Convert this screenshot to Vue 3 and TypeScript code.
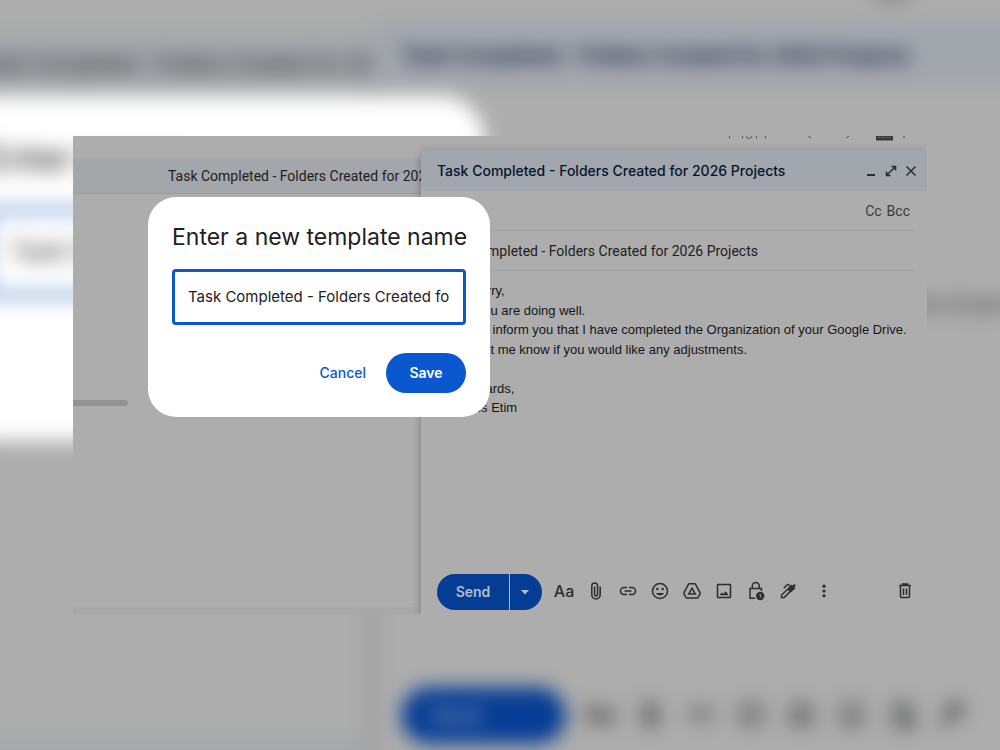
<script setup lang="ts">
import { ref } from 'vue'

const subject = ref('Task Completed - Folders Created for 2026 Projects')
const templateName = ref(subject.value)

const lines: string[] = [
  'Hello Harry,',
  'I hope you are doing well.',
  'This is to inform you that I have completed the Organization of your Google Drive.',
  'Please let me know if you would like any adjustments.',
  '',
  'Best regards,',
  'Precious Etim',
]

interface Tool {
  id: string
  label: string
}

const tools: Tool[] = [
  { id: 'attach', label: 'Attach files' },
  { id: 'link', label: 'Insert link' },
  { id: 'emoji', label: 'Insert emoji' },
  { id: 'drive', label: 'Insert files using Drive' },
  { id: 'image', label: 'Insert photo' },
  { id: 'lock', label: 'Confidential mode' },
  { id: 'pen', label: 'Insert signature' },
]
</script>

<template>
  <div class="page">
    <svg class="sprite" aria-hidden="true">
      <symbol id="attach" viewBox="0 0 20 20">
        <path class="line" d="M14.200 5.500v8.200a4.200 4.200 0 0 1-8.400 0V4.800a2.900 2.900 0 0 1 5.800 0v8.700a1.500 1.500 0 0 1-3 0V5.500" />
      </symbol>
      <symbol id="link" viewBox="0 0 20 20">
        <path class="line" d="M9 6.500H6a3.500 3.500 0 0 0 0 7h3M11 6.500h3a3.500 3.500 0 0 1 0 7h-3M6.500 10h7" />
      </symbol>
      <symbol id="emoji" viewBox="0 0 20 20">
        <circle class="line" cx="10" cy="10" r="7.500" />
        <circle cx="7.300" cy="8" r="1.200" />
        <circle cx="12.700" cy="8" r="1.200" />
        <path d="M6 12h8a4.200 3.500 0 0 1-8 0z" />
      </symbol>
      <symbol id="drive" viewBox="0 0 20 20">
        <path class="line" d="M7.300 2.800h5.400q.6 0 .9.500l4.400 8.400q.3.600 0 1.200l-1.900 3.400q-.3.600-1 .6H4.900q-.7 0-1-.6L2 12.900q-.3-.6 0-1.200l4.400-8.400q.3-.5.900-.5z" />
        <path class="line" d="M10 7.200l3.300 5.900H6.700z" />
      </symbol>
      <symbol id="image" viewBox="0 0 20 20">
        <rect class="line" x="3.500" y="3.500" width="13" height="13" rx="0.500" />
        <path d="M5.500 14.200l2.300-2.800 1.500 1.600 2.400-2.800 3 4z" />
      </symbol>
      <symbol id="lock" viewBox="0 0 20 20">
        <path class="line" d="M6.300 7.500V5a3.500 3.500 0 0 1 7 0v2.500M15.500 10V7.500H4v9.700h5" />
        <circle cx="14.200" cy="15" r="4.200" />
        <path class="cut" d="M14.200 12.700v2.500l1.500 1.300" />
      </symbol>
      <symbol id="pen" viewBox="0 0 20 20">
        <path class="line" d="M10 8l2.400 2.400-6.300 6.200H3.500V14zM5.800 7.300l3.400-3.500q.7-.6 1.400 0l1.200 1" />
        <path d="M9.500 7.500l4-4 1.300 1 1.500-1.500 1.500 1.500-1.400 1.500 1 1.200-4.500 4.200z" />
      </symbol>
    </svg>

    <svg class="backdrop" viewBox="73 136 854 478" preserveAspectRatio="xMidYMid slice" aria-hidden="true">
      <defs>
        <filter id="haze" filterUnits="userSpaceOnUse" x="20" y="90" width="960" height="570" color-interpolation-filters="sRGB">
          <feGaussianBlur stdDeviation="6" />
        </filter>
      </defs>
      <g filter="url(#haze)">
        <rect x="0" y="60" width="1000" height="620" fill="#adadad" />
        <rect x="0" y="158" width="421" height="35" fill="#a3a6aa" />
        <rect x="0" y="607" width="421" height="40" fill="#a4a8ae" />
        <text class="b-row" x="168" y="181">Task Completed - Folders Created for 20</text>
        <rect x="415" y="193" width="6" height="460" fill="#9a9a9a" />
        <rect x="421" y="150" width="580" height="41" fill="#a2a6ad" />
        <text class="b-head" x="437" y="176">{{ subject }}</text>
        <rect x="740" y="126" width="20" height="11" fill="#888" />
        <text class="b-body" x="437" y="334">{{ lines[2] }}</text>
        <rect x="148" y="197" width="342" height="220" rx="28" fill="#fff" />
        <text class="b-title" x="172" y="245">Enter a new</text>
        <rect x="173" y="270" width="292" height="54" fill="none" stroke="#2a6abf" stroke-width="3" />
        <text class="b-name" x="188" y="302">Task C</text>
        <rect x="437" y="574" width="105" height="36" rx="18" fill="#063d94" />
        <text class="b-send" x="456" y="597">Send</text>
        <text class="b-aa" x="554" y="597">Aa</text>
        <svg v-for="(tool, i) in tools" :key="tool.id" class="icon" :x="586 + i * 32" y="581" width="20" height="20">
          <use :href="'#' + tool.id" />
        </svg>
      </g>
    </svg>

    <main class="stage">
      <section class="reader">
        <header class="reader-head">{{ subject }}</header>
        <div class="reader-body"><span class="scroll"></span></div>
        <div class="reader-foot"></div>
      </section>

      <section class="side">
        <div class="pager">
          <svg width="180" height="5" viewBox="0 0 180 5" aria-hidden="true">
            <path class="scrap" d="M1.500 0v2.500M14.500 0v2.500M18.500 0q0 2.500 2.500 2.500T24 0M28.500 0v2.500M37.500 0v2.500M80 0l3 2M121 0l-3 2M175 1h2" />
            <path class="keys" d="M148 0h17v4.500h-17z" />
            <path class="keys-row" d="M150 1.500h13" />
          </svg>
        </div>
        <article class="compose">
          <header class="compose-head">
            <h1>{{ subject }}</h1>
            <button type="button" aria-label="Minimize">
              <svg width="20" height="20" viewBox="0 0 20 20"><path class="line thick" d="M6 14h8" /></svg>
            </button>
            <button type="button" aria-label="Full screen">
              <svg width="20" height="20" viewBox="0 0 20 20">
                <path class="line" d="M5.500 14.500l9-9M10.500 5.500h4v4M5.500 10.500v4h4" />
              </svg>
            </button>
            <button type="button" aria-label="Close">
              <svg width="20" height="20" viewBox="0 0 20 20"><path class="line" d="M5.500 5.500l9 9M14.500 5.500l-9 9" /></svg>
            </button>
          </header>
          <div class="field copies">
            <button type="button">Cc</button>
            <button type="button">Bcc</button>
          </div>
          <div class="field">
            <input v-model="subject" type="text" aria-label="Subject" />
          </div>
          <div class="message">
            <p v-for="(line, i) in lines" :key="i">{{ line }}</p>
          </div>
          <footer class="tools">
            <div class="send">
              <button type="button" class="send-main">Send</button>
              <button type="button" class="send-more" aria-label="More send options">
                <svg width="10" height="5" viewBox="0 0 10 5"><path d="M1 0h8L5 4.500z" /></svg>
              </button>
            </div>
            <button type="button" class="tool aa" aria-label="Formatting options">Aa</button>
            <button v-for="tool in tools" :key="tool.id" type="button" class="tool" :aria-label="tool.label">
              <svg class="icon" width="20" height="20"><use :href="'#' + tool.id" /></svg>
            </button>
            <button type="button" class="tool more" aria-label="More options">
              <svg class="icon" width="20" height="20" viewBox="0 0 20 20">
                <circle cx="10" cy="5.200" r="1.600" /><circle cx="10" cy="10" r="1.600" /><circle cx="10" cy="14.800" r="1.600" />
              </svg>
            </button>
            <button type="button" class="tool discard" aria-label="Discard draft">
              <svg class="icon" width="20" height="20" viewBox="0 0 20 20">
                <path class="line" d="M4 4.500h12M7.500 4V3h5v1M5.500 5v10.500q0 1 1 1h7q1 0 1-1V5M8.500 7.500v6.500M11.500 7.500v6.500" />
              </svg>
            </button>
          </footer>
        </article>
      </section>

      <form class="dialog" role="dialog" aria-labelledby="dialog-title" @submit.prevent>
        <h2 id="dialog-title">Enter a new template name</h2>
        <input v-model="templateName" type="text" aria-labelledby="dialog-title" />
        <div class="actions">
          <button type="button" class="cancel">Cancel</button>
          <button type="submit" class="save">Save</button>
        </div>
      </form>
    </main>
  </div>
</template>

<style>
body {
  background: #adadad;
}
</style>

<style scoped>
* {
  box-sizing: border-box;
}
.page {
  position: relative;
  display: flex;
  min-height: 100vh;
  padding: 136px 73px;
  overflow: hidden;
  font-family: Roboto, 'Open Sans', sans-serif;
  font-size: 14px;
  color: #1f2022;
}
.sprite {
  position: absolute;
  width: 0;
  height: 0;
}
.backdrop {
  position: absolute;
  inset: 0;
  width: 100%;
  height: 100%;
}
.backdrop text {
  fill: #202225;
}
.b-row {
  font-size: 14px;
}
.backdrop .b-head {
  font-size: 14px;
  font-weight: 500;
  fill: #06152f;
}
.b-body {
  font-family: 'Liberation Sans', Arial, sans-serif;
  font-size: 13px;
}
.b-title {
  font-size: 24px;
}
.b-name {
  font-size: 16px;
}
.backdrop .b-send {
  font-size: 14px;
  font-weight: 500;
  fill: #8f9fbd;
}
.b-aa {
  font-size: 16px;
  font-weight: 500;
}
button {
  display: flex;
  align-items: center;
  justify-content: center;
  padding: 0;
  border: 0;
  background: none;
  color: inherit;
  font: inherit;
}
input {
  font: inherit;
  color: inherit;
  outline: none;
}
.line {
  fill: none;
  stroke: #2b2d2f;
  stroke-width: 1.5px;
}
.thick {
  stroke-width: 2px;
}
.cut {
  fill: none;
  stroke: #adadad;
  stroke-width: 1px;
}
.icon {
  fill: #2b2d2f;
}
.stage {
  position: relative;
  display: grid;
  grid-template-columns: 348fr 506fr;
  flex: 1;
  min-width: 0;
  background: #adadad;
  overflow: hidden;
}
.reader {
  display: flex;
  flex-direction: column;
  min-width: 0;
  padding-top: 22px;
}
.reader-head {
  height: 36px;
  padding-left: 95px;
  border-bottom: 1px solid #989b9f;
  background: #a3a6aa;
  line-height: 36px;
  white-space: nowrap;
  overflow: hidden;
}
.reader-body {
  flex: 1;
  padding-top: 206px;
}
.scroll {
  display: block;
  width: 55px;
  height: 6px;
  border-radius: 0 3px 3px 0;
  background: #929297;
}
.reader-foot {
  height: 7px;
  background: #a5a9ae;
}
.side {
  display: flex;
  flex-direction: column;
  min-width: 0;
}
.pager {
  display: flex;
  justify-content: flex-end;
  height: 14px;
  padding-right: 19px;
}
.scrap {
  fill: none;
  stroke: #58595b;
  stroke-width: 1px;
}
.keys {
  fill: #38393b;
}
.keys-row {
  stroke: #67686a;
  stroke-dasharray: 2 1;
}
.compose {
  display: flex;
  flex: 1;
  flex-direction: column;
  border-top-left-radius: 6px;
  background: #adadad;
  box-shadow: 0 2px 9px rgba(0, 0, 0, 0.3);
}
.compose-head {
  display: flex;
  align-items: center;
  height: 41px;
  padding: 0 6px 0 16px;
  border-top-left-radius: 6px;
  background: #a2a6ad;
}
.compose-head h1 {
  flex: 1;
  margin: 0;
  color: #06152f;
  font-family: Inter, sans-serif;
  font-size: 14px;
  font-weight: 500;
  white-space: nowrap;
}
.field {
  display: flex;
  height: 40px;
  margin: 0 13px 0 16px;
  border-bottom: 1px solid #9e9fa1;
}
.field input {
  flex: 1;
  min-width: 0;
  padding: 0;
  border: 0;
  background: none;
}
.copies {
  justify-content: flex-end;
  gap: 5px;
  padding-right: 4px;
  color: #3a3b3d;
}
.message {
  flex: 1;
  padding: 10px 16px 0;
  font-family: 'Liberation Sans', Arial, sans-serif;
  font-size: 13px;
  line-height: 1.5;
  color: #151515;
}
.message p {
  min-height: 1.5em;
  margin: 0;
}
.tools {
  display: flex;
  align-items: center;
  padding: 0 6px 4px 16px;
}
.send {
  display: flex;
  gap: 1px;
  height: 36px;
  margin-right: 6px;
  border-radius: 18px;
  background: #a9b4c8;
  overflow: hidden;
  color: #b3bccb;
  font-family: Inter, sans-serif;
  font-weight: 600;
}
.send button {
  background: #063d94;
}
.send-main {
  width: 72px;
  padding-bottom: 2px;
}
.send-more {
  width: 32px;
  padding-right: 2px;
  fill: #b3bccb;
}
.tool {
  width: 32px;
  height: 36px;
  padding-bottom: 2px;
}
.aa {
  font-family: Inter, sans-serif;
  font-size: 16px;
  font-weight: 500;
  color: #2b2d2f;
}
.more {
  margin-left: 4px;
}
.discard {
  margin-left: auto;
}
.dialog {
  position: absolute;
  top: 61px;
  left: 75px;
  display: flex;
  flex-direction: column;
  width: 342px;
  padding: 24px;
  border-radius: 28px;
  background: #fff;
  font-family: Inter, sans-serif;
}
.dialog h2 {
  margin: 0 0 16px;
  font-size: 23px;
  font-weight: 400;
  line-height: 32px;
  white-space: nowrap;
}
.dialog input {
  width: 100%;
  height: 56px;
  padding: 0 13px 2px;
  border: 3px solid #0b57d0;
  border-radius: 4px;
  background: #fff;
  font-size: 15px;
}
.actions {
  display: flex;
  justify-content: flex-end;
  gap: 8px;
  margin-top: 28px;
}
.actions button {
  height: 40px;
  padding: 0 12px 2px;
  border-radius: 20px;
  font-weight: 500;
}
.cancel {
  color: #0b57d0;
}
.actions .save {
  width: 80px;
  background: #0b57d0;
  color: #fff;
  font-weight: 600;
}
</style>
